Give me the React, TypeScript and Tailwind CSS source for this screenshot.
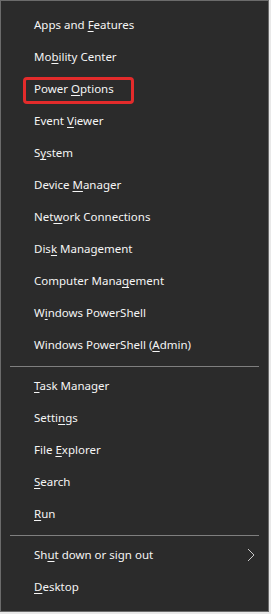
import React from 'react';

type Item = { pre: string; key: string; post: string; arrow?: boolean };

const groups: Item[][] = [
  [
    { pre: 'Apps and ', key: 'F', post: 'eatures' },
    { pre: 'Mo', key: 'b', post: 'ility Center' },
    { pre: 'Power ', key: 'O', post: 'ptions' },
    { pre: 'Event ', key: 'V', post: 'iewer' },
    { pre: 'S', key: 'y', post: 'stem' },
    { pre: 'Device ', key: 'M', post: 'anager' },
    { pre: 'Net', key: 'w', post: 'ork Connections' },
    { pre: 'Dis', key: 'k', post: ' Management' },
    { pre: 'Computer Mana', key: 'g', post: 'ement' },
    { pre: 'W', key: 'i', post: 'ndows PowerShell' },
    { pre: 'Windows PowerShell (', key: 'A', post: 'dmin)' },
  ],
  [
    { pre: '', key: 'T', post: 'ask Manager' },
    { pre: 'Setti', key: 'n', post: 'gs' },
    { pre: 'File ', key: 'E', post: 'xplorer' },
    { pre: '', key: 'S', post: 'earch' },
    { pre: '', key: 'R', post: 'un' },
  ],
  [
    { pre: 'Sh', key: 'u', post: 't down or sign out', arrow: true },
    { pre: '', key: 'D', post: 'esktop' },
  ],
];

const Row = ({ item }: { item: Item }) => (
  <div className="flex h-[32px] items-center justify-between pl-[33px] pr-[13px]">
    <span>
      {item.pre}
      <span className="underline decoration-1 underline-offset-2">{item.key}</span>
      {item.post}
    </span>
    {item.arrow && (
      <svg width="8" height="14" viewBox="0 0 8 14" fill="none">
        <path d="M1 1l6 6-6 6" stroke="#c8c8c8" strokeWidth="1" />
      </svg>
    )}
  </div>
);

export default function App() {
  return (
    <div className="h-[614px] w-[271px] bg-[#e8e8e8]">
      <div
        className="relative h-[612px] w-[269px] border border-[#6b6b6b] bg-[#2b2b2b] pt-[8px] text-[11.5px] text-[#f5f5f5]"
        style={{ fontFamily: '"Noto Sans", "Open Sans", sans-serif' }}
      >
        {groups.map((g, gi) => (
          <div key={gi}>
            {gi > 0 && (
              <div className="pb-[3px] pl-[9px] pr-[9px] pt-[5px]">
                <div className="h-px bg-[#7f7f7f]" />
              </div>
            )}
            {g.map((it, i) => (
              <Row key={i} item={it} />
            ))}
          </div>
        ))}
        <div className="absolute left-[22px] top-[76px] h-[27px] w-[111px] rounded-[4px] border-[3px] border-[#e32b2b]" />
      </div>
    </div>
  );
}
